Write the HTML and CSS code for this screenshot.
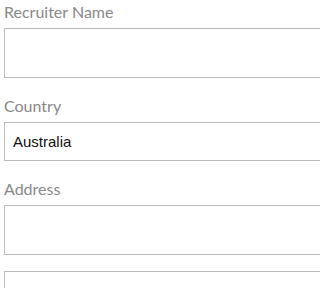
FILE: index.html
```html
<!DOCTYPE html>
<html>
<head>
<meta charset="utf-8">
<link rel="stylesheet" href="styles.css">
</head>
<body>
<div class="page">
<form class="form">
  <div class="field">
    <label class="label">Recruiter Name</label>
    <div class="input tall"></div>
  </div>
  <div class="field">
    <label class="label">Country</label>
    <div class="input short">Australia</div>
  </div>
  <div class="field">
    <label class="label">Address</label>
    <div class="input tall"></div>
    <div class="input tall second"></div>
  </div>
</form>
</div>
</body>
</html>
```
FILE: styles.css
```css
html, body {
  margin: 0;
  padding: 0;
  background: #ffffff;
}
.page {
  width: 100%;
  height: 100vh;
  overflow: hidden;
}
.form {
  width: 600px;
  padding-left: 4px;
  display: flex;
  flex-direction: column;
  gap: 16px;
}
.field {
  display: flex;
  flex-direction: column;
}
.label {
  font-family: Lato, "Open Sans", sans-serif;
  font-size: 16px;
  line-height: 24px;
  color: #888888;
  margin-bottom: 4px;
}
.input {
  box-sizing: border-box;
  border: 1px solid #bbbbbb;
  background: #ffffff;
  font-family: "Liberation Sans", Arial, sans-serif;
  font-size: 15px;
  color: #111111;
  padding: 0 8px;
}
.tall {
  height: 50px;
}
.short {
  height: 39px;
  line-height: 37px;
}
.second {
  margin-top: 16px;
}
```
